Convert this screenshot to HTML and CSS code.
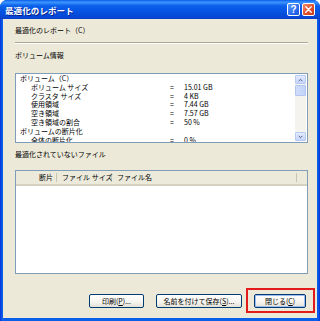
FILE: index.html
```html
<!DOCTYPE html>
<html lang="ja">
<head>
  <meta charset="UTF-8" />
  <title>最適化のレポート</title>
  <link rel="stylesheet" href="styles.css">
</head>
<body>
  <div class="window">
    <!-- title bar -->
    <header class="titlebar">
      <span class="title">最適化のレポート</span>
      <div class="caption-btns">
        <span class="cap-btn help">?</span>
        <span class="cap-btn close">
          <svg viewBox="0 0 9 9" width="7" height="7"><path d="M1 1L8 8M8 1L1 8" stroke="#fff" stroke-width="1.8" stroke-linecap="round"/></svg>
        </span>
      </div>
    </header>

    <main class="client">
      <div class="heading">最適化のレポート（C）</div>
      <hr class="sep">

      <div class="label">ボリューム情報</div>
      <div class="textbox">
        <div class="report">
          <div class="row"><span>ボリューム（C）</span><span></span><span></span></div>
          <div class="row sub"><span>ボリューム サイズ</span><span>=</span><span>15.01 GB</span></div>
          <div class="row sub"><span>クラスタ サイズ</span><span>=</span><span>4 KB</span></div>
          <div class="row sub"><span>使用領域</span><span>=</span><span>7.44 GB</span></div>
          <div class="row sub"><span>空き領域</span><span>=</span><span>7.57 GB</span></div>
          <div class="row sub"><span>空き領域の割合</span><span>=</span><span>50 %</span></div>
          <div class="row"><span>ボリュームの断片化</span><span></span><span></span></div>
          <div class="row sub"><span>全体の断片化</span><span>=</span><span>0 %</span></div>
        </div>
        <div class="scrollbar">
          <span class="sb-btn">
            <svg viewBox="0 0 7 5" width="5" height="4"><path d="M1 4L3.5 1.5L6 4" fill="none" stroke="#4d6185" stroke-width="1.4"/></svg>
          </span>
          <span class="sb-thumb"></span>
          <span class="sb-track"></span>
          <span class="sb-btn">
            <svg viewBox="0 0 7 5" width="5" height="4"><path d="M1 1L3.5 3.5L6 1" fill="none" stroke="#4d6185" stroke-width="1.4"/></svg>
          </span>
        </div>
      </div>

      <div class="label gap-files">最適化されていないファイル</div>
      <div class="listview">
        <div class="list-head">
          <span class="col c1">断片</span>
          <span class="col c2">ファイル サイズ</span>
          <span class="col c3">ファイル名</span>
          <span class="col c4"></span>
        </div>
      </div>

      <div class="actions">
        <button>印刷(<u>P</u>)...</button>
        <button class="wide">名前を付けて保存(<u>S</u>)...</button>
        <span class="marked">
          <button class="default">閉じる(<u>C</u>)</button>
        </span>
      </div>
    </main>
  </div>
</body>
</html>
```

FILE: styles.css
```css
/* ---------- base ---------- */
*,*::before,*::after{box-sizing:border-box;}
body{
  margin:0;
  background:#fff;
  font-family:"Noto Sans CJK JP","Noto Sans",sans-serif;
  color:#000;
}

/* ---------- window frame ---------- */
.window{
  width:320px;
  height:321px;
  background:linear-gradient(90deg,#0831d9 0,#0a5fe8 2px,#0a5fe8 318px,#0831d9 320px);
  border-radius:7px 7px 0 0;
  display:flex;
  flex-direction:column;
  overflow:hidden;
}

.titlebar{
  height:19px;
  flex-shrink:0;
  display:flex;
  align-items:center;
  justify-content:space-between;
  padding:0 5px 0 5px;
  background:linear-gradient(180deg,#0a5fe8 0%,#3d95ff 12%,#0b61ea 30%,#0554e3 60%,#0547d4 90%,#0a3fc4 100%);
}
.title{
  color:#fff;
  font-size:8.5px;
  font-weight:700;
  letter-spacing:.1px;
  text-shadow:1px 1px 0 #0a1f8a;
}
.caption-btns{display:flex;gap:2px;}
.cap-btn{
  width:13px;height:13px;
  border:1px solid #fff;
  border-radius:2px;
  display:flex;align-items:center;justify-content:center;
  color:#fff;
  font-family:"Liberation Sans",sans-serif;
  font-weight:700;
  font-size:10px;
}
.help{background:linear-gradient(135deg,#5f9bff 0%,#2a6cf0 60%,#1b55d8 100%);}
.close{background:linear-gradient(135deg,#f08a6a 0%,#e0502b 55%,#c83a18 100%);}

/* ---------- client area ---------- */
.client{
  flex:1;
  min-height:0;
  margin:0 3px 3px;
  background:#ece9d8;
  padding:6px 9px 0 12px;
  display:flex;
  flex-direction:column;
  font-size:7px;
  line-height:10px;
  position:relative;
}
.client > *{flex-shrink:0;}

.heading{height:10px;}
.sep{
  margin:7px 0 6px;
  border:0;
  border-top:1px solid #aca899;
  border-bottom:1px solid #fff;
  height:0;
}
.label{height:10px;}
.gap-files{margin-top:6px;}

/* ---------- report textbox ---------- */
.textbox{
  margin-top:13px;
  height:70px;
  border:1px solid #7f9db9;
  background:#fff;
  display:flex;
  overflow:hidden;
}
.report{
  flex:1;
  padding:0 0 0 4px;
  line-height:8.8px;
}
.row{
  display:grid;
  grid-template-columns:150px 14px 1fr;
  height:8.8px;
  white-space:nowrap;
}
.row.sub span:first-child{padding-left:11px;}

.scrollbar{
  width:11px;
  margin:1px 1px 1px 0;
  display:flex;
  flex-direction:column;
  background:#f4f3ee;
  gap:1px;
}
.sb-btn{
  height:9px;
  border:1px solid #b9cbf3;
  border-radius:1px;
  background:linear-gradient(180deg,#e2eafe 0%,#c5d5fb 100%);
  display:flex;align-items:center;justify-content:center;
}
.sb-thumb{
  height:11px;
  border:1px solid #b4c6f0;
  border-radius:1px;
  background:linear-gradient(90deg,#d0dcfb 0%,#c2d3fa 100%);
}
.sb-track{flex:1;}

/* ---------- list view ---------- */
.listview{
  margin-top:11px;
  height:104px;
  border:1px solid #7f9db9;
  background:#fff;
}
.list-head{
  height:15px;
  display:flex;
  background:#ebeadb;
  border-bottom:2px solid #d6d2c2;
}
.col{
  border-right:1px solid #c7c5b2;
  margin:2px 0;
  line-height:9px;
  padding:0 5px;
  white-space:nowrap;
}
.c1{width:42px;text-align:right;padding-right:3px;}
.c2{width:55px;}
.c3{width:190px;}
.c4{flex:1;border-right:0;}

/* ---------- buttons ---------- */
.actions{
  margin-top:20px;
  display:flex;
  justify-content:flex-end;
  align-items:center;
  gap:12px;
  padding-right:2px;
}
button{
  height:14px;
  width:55px;
  padding:0;
  font-family:inherit;
  font-size:7px;
  line-height:12px;
  color:#000;
  border:1px solid #003c74;
  border-radius:2px;
  background:linear-gradient(180deg,#fff 0%,#f5f4ef 60%,#e3e1d6 100%);
}
button u{text-decoration:underline;}
button.wide{width:86px;}
button.default{
  width:52px;
  box-shadow:inset 0 0 0 1px #9ebcf0;
}
.marked{
  position:relative;
  display:flex;
}
.marked::after{
  content:'';
  position:absolute;
  left:-8px;right:-9px;
  top:-6px;bottom:-5px;
  border:2px solid #e31b1b;
  pointer-events:none;
}
```
